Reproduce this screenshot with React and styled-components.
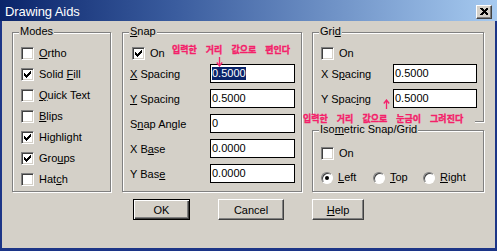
import React from "react";
import styled, { createGlobalStyle } from "styled-components";

const GlobalStyle = createGlobalStyle`
  html, body { margin: 0; padding: 0; background: #d4d0c8; }
  body { font-family: "Liberation Sans", Arial, sans-serif; font-size: 11px; color: #000; }
  #root { width: 497px; height: 251px; }
  * { box-sizing: border-box; }
`;

const FACE = "#d4d0c8";
const RED = "#f4206a";

const Window = styled.div`
  width: 497px;
  height: 251px;
  display: flex;
  flex-direction: column;
  background: #1c3587;
`;

const TitleBar = styled.div`
  height: 21px;
  padding: 2px 5px 0 5px;
  display: flex;
  align-items: center;
  justify-content: space-between;
  background: linear-gradient(to right, #0a246a 0%, #3a5c9e 35%, #a6caf0 100%);
`;

const TitleText = styled.span`
  color: #fff;
  font-size: 13px;
  line-height: 16px;
  letter-spacing: -0.1px;
`;

const CloseButton = styled.div`
  width: 16px;
  height: 14px;
  background: ${FACE};
  border: 1px solid;
  border-color: #fff #404040 #404040 #fff;
  box-shadow: inset -1px -1px #808080;
  display: flex;
  align-items: center;
  justify-content: center;
`;

const Client = styled.div`
  position: relative;
  flex: 1;
  margin: 0 2px 3px 2px;
  background: ${FACE};
  padding: 11px 0 0 10px;
  display: flex;
  flex-direction: column;
`;

const Columns = styled.div`
  display: flex;
  align-items: flex-start;
`;

const Column = styled.div`
  display: flex;
  flex-direction: column;
  gap: 8px;
  margin-left: ${(p) => p.$ml || 0}px;
`;

const GroupBox = styled.div`
  position: relative;
  width: ${(p) => p.$w}px;
  height: ${(p) => p.$h}px;
  margin-left: ${(p) => p.$ml || 0}px;
  border: 1px solid #808080;
  box-shadow: inset 1px 1px #fff, 1px 1px #fff;
  padding: ${(p) => p.$pt || 14}px 0 0 ${(p) => p.$pl || 8}px;
  display: flex;
  flex-direction: column;
`;

const GroupTitle = styled.span`
  position: absolute;
  left: 6px;
  top: -7px;
  padding: 0 1px;
  line-height: 11px;
  background: ${FACE};
`;

const CheckList = styled.div`
  display: flex;
  flex-direction: column;
  gap: 8px;
`;

const CheckRow = styled.div`
  display: flex;
  align-items: center;
  gap: 5px;
  height: 13px;
  line-height: 13px;
  margin-left: ${(p) => p.$ml || 0}px;
  margin-bottom: ${(p) => p.$mb || 0}px;
`;

const Box = styled.span`
  width: 13px;
  height: 13px;
  flex: none;
  background: #fff;
  border: 1px solid;
  border-color: #808080 #fff #fff #808080;
  box-shadow: inset 1px 1px #404040, inset -1px -1px ${FACE};
  position: relative;
`;

const CheckGlyph = styled.svg`
  position: absolute;
  left: -1px;
  top: -1px;
`;

const RadioDot = styled.span`
  width: 12px;
  height: 12px;
  flex: none;
  border-radius: 50%;
  background: #fff;
  border: 1px solid;
  border-color: #808080 #fff #fff #808080;
  box-shadow: inset 1px 1px #404040;
  display: flex;
  align-items: center;
  justify-content: center;
  &::after {
    content: "";
    width: 4px;
    height: 4px;
    border-radius: 50%;
    background: ${(p) => (p.$on ? "#000" : "transparent")};
  }
`;

const RadioRow = styled.div`
  display: grid;
  grid-template-columns: 52px 50px auto;
  margin-top: 11px;
  height: 13px;
`;

const RadioItem = styled.div`
  display: flex;
  align-items: center;
  gap: 5px;
  line-height: 13px;
`;

const Fields = styled.div`
  display: flex;
  flex-direction: column;
  gap: 6px;
`;

const Field = styled.div`
  display: grid;
  grid-template-columns: ${(p) => p.$label}px ${(p) => p.$input}px;
  align-items: center;
  height: 19px;
`;

const TextBox = styled.div`
  height: 19px;
  background: #fff;
  border: 1px solid #000;
  padding-left: 1px;
  display: flex;
  align-items: center;
  line-height: 13px;
`;

const Selected = styled.span`
  background: #0a246a;
  color: #fff;
`;

const Buttons = styled.div`
  display: flex;
  gap: 28px;
  margin-top: 7px;
  padding-left: 121px;
`;

const Button = styled.div`
  width: ${(p) => p.$w}px;
  height: 21px;
  display: flex;
  align-items: center;
  justify-content: center;
  background: ${FACE};
  border: 1px solid;
  border-color: ${(p) => (p.$default ? "#000" : "#fff #404040 #404040 #fff")};
  box-shadow: ${(p) =>
    p.$default
      ? "inset 1px 1px #fff, inset -1px -1px #404040, inset -2px -2px #808080"
      : "inset -1px -1px #808080"};
`;

const Note = styled.div`
  position: absolute;
  left: ${(p) => p.$x}px;
  top: ${(p) => p.$y}px;
  display: flex;
  gap: 9px;
  padding-right: ${(p) => p.$pr || 0}px;
  background: ${(p) => (p.$bg ? FACE : "transparent")};
  color: ${RED};
  font-family: "Noto Sans CJK KR", "Noto Sans", sans-serif;
  font-weight: 700;
  font-size: 9px;
  line-height: 10px;
  -webkit-text-stroke: 0.35px ${RED};
  white-space: nowrap;
`;

const Arrow = styled.svg`
  position: absolute;
  left: ${(p) => p.$x}px;
  top: ${(p) => p.$y}px;
`;

const CHECK_COLS = [2, 3, 4, 3, 2, 1, 0];

const Check = ({ on }) => (
  <Box>
    {on && (
      <CheckGlyph width="13" height="13" viewBox="0 0 13 13" shapeRendering="crispEdges">
        {CHECK_COLS.map((r, c) => (
          <rect key={c} x={3 + c} y={3 + r} width="1" height="3" fill="#000" />
        ))}
      </CheckGlyph>
    )}
  </Box>
);

const CheckItem = ({ on, children, ml, mb }) => (
  <CheckRow $ml={ml} $mb={mb}>
    <Check on={on} />
    <span>{children}</span>
  </CheckRow>
);

const Words = ({ text }) => text.split(" ").map((w, i) => <span key={i}>{w}</span>);

export default function App() {
  return (
    <>
      <GlobalStyle />
      <Window>
        <TitleBar>
          <TitleText>Drawing Aids</TitleText>
          <CloseButton>
            <svg width="8" height="7" viewBox="0 0 8 7" shapeRendering="crispEdges">
              <path d="M0 0h2l2 2l2-2h2v1l-2.5 2.5L8 6v1H6L4 5L2 7H0V6l2.5-2.5L0 1z" fill="#000" />
            </svg>
          </CloseButton>
        </TitleBar>
        <Client>
          <Columns>
            <GroupBox $w={99} $h={160} $pl={8}>
              <GroupTitle>Modes</GroupTitle>
              <CheckList>
                <CheckItem><u>O</u>rtho</CheckItem>
                <CheckItem on>Solid <u>F</u>ill</CheckItem>
                <CheckItem><u>Q</u>uick Text</CheckItem>
                <CheckItem><u>B</u>lips</CheckItem>
                <CheckItem on>Highlight</CheckItem>
                <CheckItem on>Gro<u>u</u>ps</CheckItem>
                <CheckItem>Hat<u>c</u>h</CheckItem>
              </CheckList>
            </GroupBox>

            <GroupBox $w={180} $h={160} $ml={11} $pl={7}>
              <GroupTitle><u>S</u>nap</GroupTitle>
              <CheckItem on ml={2} mb={4}>On</CheckItem>
              <Fields>
                <Field $label={80} $input={85}>
                  <span><u>X</u> Spacing</span>
                  <TextBox><Selected>0.5000</Selected></TextBox>
                </Field>
                <Field $label={80} $input={85}>
                  <span><u>Y</u> Spacing</span>
                  <TextBox>0.5000</TextBox>
                </Field>
                <Field $label={80} $input={85}>
                  <span>S<u>n</u>ap Angle</span>
                  <TextBox>0</TextBox>
                </Field>
                <Field $label={80} $input={85}>
                  <span>X B<u>a</u>se</span>
                  <TextBox>0.0000</TextBox>
                </Field>
                <Field $label={80} $input={85}>
                  <span>Y Bas<u>e</u></span>
                  <TextBox>0.0000</TextBox>
                </Field>
              </Fields>
            </GroupBox>

            <Column $ml={10}>
              <GroupBox $w={172} $h={90} $pl={8}>
                <GroupTitle>Gri<u>d</u></GroupTitle>
                <CheckItem mb={4}>On</CheckItem>
                <Fields>
                  <Field $label={72} $input={84}>
                    <span>X S<u>p</u>acing</span>
                    <TextBox>0.5000</TextBox>
                  </Field>
                  <Field $label={72} $input={84}>
                    <span>Y Spac<u>i</u>ng</span>
                    <TextBox>0.5000</TextBox>
                  </Field>
                </Fields>
              </GroupBox>
              <GroupBox $w={172} $h={62} $pl={8} $pt={16}>
                <GroupTitle>Iso<u>m</u>etric Snap/Grid</GroupTitle>
                <CheckItem>On</CheckItem>
                <RadioRow>
                  <RadioItem><RadioDot $on /><span><u>L</u>eft</span></RadioItem>
                  <RadioItem><RadioDot /><span><u>T</u>op</span></RadioItem>
                  <RadioItem><RadioDot /><span><u>R</u>ight</span></RadioItem>
                </RadioRow>
              </GroupBox>
            </Column>
          </Columns>

          <Buttons>
            <Button $w={57} $default>OK</Button>
            <Button $w={66}>Cancel</Button>
            <Button $w={52}><span><u>H</u>elp</span></Button>
          </Buttons>

          <Note $x={170} $y={24}>
            <Words text="입력한 거리 값으로 편인다" />
          </Note>
          <Arrow $x={214} $y={36} width="7" height="10" viewBox="0 0 7 10">
            <path d="M3.5 0v9M0.8 5.5L3.5 9L6.2 5.5" stroke={RED} strokeWidth="1.3" fill="none" />
          </Arrow>

          <Note $x={301} $y={93} $bg $pr={12}>
            <Words text="입력한 거리 값으로 눈금이 그려진다" />
          </Note>
          <Arrow $x={381} $y={78} width="7" height="10" viewBox="0 0 7 10">
            <path d="M3.5 10V1M0.8 4.5L3.5 1L6.2 4.5" stroke={RED} strokeWidth="1.3" fill="none" />
          </Arrow>
        </Client>
      </Window>
    </>
  );
}
